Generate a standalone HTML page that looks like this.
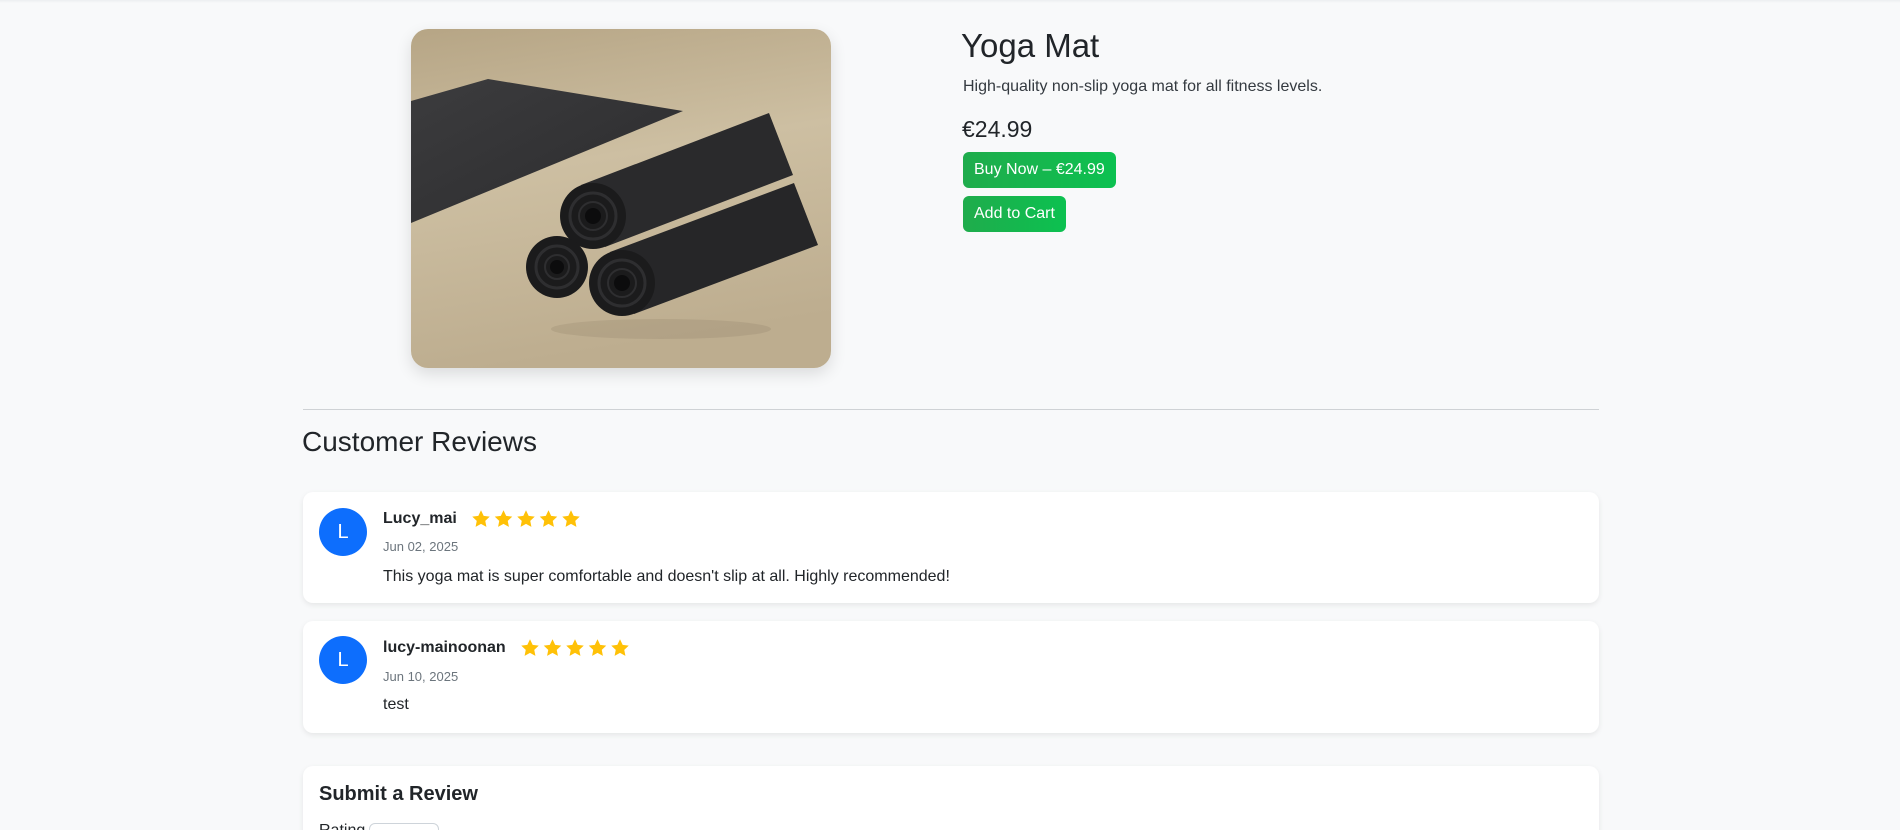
<!DOCTYPE html>
<html><head><meta charset="utf-8"><style>
*{box-sizing:border-box;margin:0;padding:0}
html,body{width:1900px;height:830px;overflow:hidden}
body{background:#f8f9fa;font-family:"Liberation Sans",Arial,sans-serif;color:#212529;position:relative}
.a{position:absolute;white-space:nowrap}
.topbar{position:absolute;left:0;top:0;width:1900px;height:3px;background:linear-gradient(#eceef0,#f8f9fa)}
.img{position:absolute;left:411px;top:29px;width:420px;height:339px;border-radius:17px;overflow:hidden;box-shadow:0 6px 16px rgba(0,0,0,.12)}
.btn{position:absolute;left:963px;height:36px;border-radius:6px;color:#fff;font-size:16px;line-height:36px;padding:0 11px;background:linear-gradient(90deg,#1fac4c,#0cc150)}
.card{position:absolute;left:303px;width:1296px;background:#fff;border-radius:10px;box-shadow:0 2px 6px rgba(0,0,0,.08)}
.av{position:absolute;left:319px;width:48px;height:48px;border-radius:50%;background:#0d6efd;color:#fff;font-size:20px;line-height:48px;text-align:center}
.name{font-weight:bold;font-size:16px;color:#212529}
.date{font-size:13px;color:#6c757d}
.txt{font-size:16px;color:#212529}
</style></head><body>
<svg width="0" height="0" style="position:absolute"><defs><symbol id="st" viewBox="0 0 24 24"><path d="M12 1.5l3.2 6.8 7.3.9-5.4 5 1.4 7.3L12 17.9l-6.5 3.6 1.4-7.3-5.4-5 7.3-.9z" fill="#ffc107"/></symbol></defs></svg>
<div class="topbar"></div>
<div class="img">
<svg width="420" height="339" viewBox="0 0 420 339">
<defs>
<linearGradient id="w" x1="0" y1="0" x2="0.2" y2="1"><stop offset="0" stop-color="#b6a585"/><stop offset=".45" stop-color="#cdbfa2"/><stop offset="1" stop-color="#bdad8f"/></linearGradient>
<linearGradient id="m" x1="0" y1="0" x2="1" y2="1"><stop offset="0" stop-color="#3c3c3e"/><stop offset="1" stop-color="#2b2b2d"/></linearGradient>
</defs>
<rect width="420" height="339" fill="url(#w)"/>
<polygon points="0,72 77,50 272,82 0,194" fill="url(#m)"/>
<ellipse cx="250" cy="300" rx="110" ry="10" fill="#8f8068" opacity=".25"/>
<polygon points="199,223 383,154 407,216 223,285" fill="#262628"/>
<polygon points="170,156 358,84 382,146 194,218" fill="#2a2a2c"/>
<circle cx="182" cy="187" r="33" fill="#1b1b1c"/>
<circle cx="182" cy="187" r="23" fill="none" stroke="#2e2e30" stroke-width="3"/>
<circle cx="182" cy="187" r="14" fill="none" stroke="#2e2e30" stroke-width="2"/>
<circle cx="182" cy="187" r="8" fill="#0c0c0d"/>
<circle cx="146" cy="238" r="31" fill="#1b1b1c"/>
<circle cx="146" cy="238" r="21" fill="none" stroke="#2e2e30" stroke-width="3"/>
<circle cx="146" cy="238" r="12" fill="none" stroke="#2e2e30" stroke-width="2"/>
<circle cx="146" cy="238" r="7" fill="#0c0c0d"/>
<circle cx="211" cy="254" r="33" fill="#1b1b1c"/>
<circle cx="211" cy="254" r="23" fill="none" stroke="#2e2e30" stroke-width="3"/>
<circle cx="211" cy="254" r="14" fill="none" stroke="#2e2e30" stroke-width="2"/>
<circle cx="211" cy="254" r="8" fill="#0c0c0d"/>
</svg>
</div>
<div class="a" style="left:961px;top:24px;font-size:33px;line-height:44px;color:#212529">Yoga Mat</div>
<div class="a" style="left:963px;top:77px;font-size:16px;line-height:19px;color:#343a40">High-quality non-slip yoga mat for all fitness levels.</div>
<div class="a" style="left:962px;top:116px;font-size:23px;line-height:26px;color:#212529">€24.99</div>
<div class="btn" style="top:152px">Buy Now – €24.99</div>
<div class="btn" style="top:196px">Add to Cart</div>
<div class="a" style="left:303px;top:409px;width:1296px;height:1px;background:#cfd2d5"></div>
<div class="a" style="left:302px;top:425px;font-size:28px;line-height:34px;color:#212529">Customer Reviews</div>
<div class="card" style="top:492px;height:111px"></div>
<div class="av" style="top:508px">L</div>
<div class="a name" style="left:383px;top:510px">Lucy_mai</div>
<div class="a" style="left:471px;top:509px"><svg width="115" height="20"><use href="#st" x="0" width="20" height="20"/><use href="#st" x="22.5" width="20" height="20"/><use href="#st" x="45" width="20" height="20"/><use href="#st" x="67.5" width="20" height="20"/><use href="#st" x="90" width="20" height="20"/></svg></div>
<div class="a date" style="left:383px;top:539px">Jun 02, 2025</div>
<div class="a txt" style="left:383px;top:568px">This yoga mat is super comfortable and doesn't slip at all. Highly recommended!</div>
<div class="card" style="top:621px;height:112px"></div>
<div class="av" style="top:636px">L</div>
<div class="a name" style="left:383px;top:639px">lucy-mainoonan</div>
<div class="a" style="left:520px;top:638px"><svg width="115" height="20"><use href="#st" x="0" width="20" height="20"/><use href="#st" x="22.5" width="20" height="20"/><use href="#st" x="45" width="20" height="20"/><use href="#st" x="67.5" width="20" height="20"/><use href="#st" x="90" width="20" height="20"/></svg></div>
<div class="a date" style="left:383px;top:669px">Jun 10, 2025</div>
<div class="a txt" style="left:383px;top:696px">test</div>
<div class="card" style="top:766px;height:120px"></div>
<div class="a" style="left:319px;top:783px;font-size:20px;font-weight:bold;color:#212529">Submit a Review</div>
<div class="a" style="left:319px;top:822px;font-size:16px;color:#212529">Rating</div>
<div class="a" style="left:369px;top:823px;width:70px;height:30px;border:1px solid #ced4da;border-radius:6px;background:#fff"></div>
</body></html>
